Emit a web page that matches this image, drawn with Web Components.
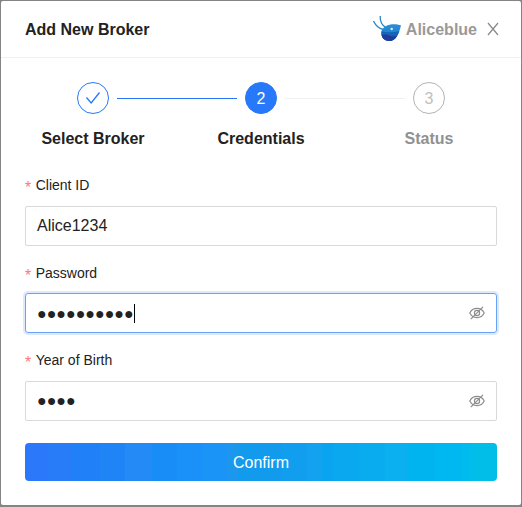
<!DOCTYPE html>
<html lang="en">
<head>
<meta charset="utf-8">
<title>Add New Broker</title>
<style>
html,body{margin:0;height:100%}
body{background:#858383;font-family:"Liberation Sans",Arial,sans-serif;color:#222;box-sizing:border-box;padding:1px 1px 2px;overflow:hidden}
</style>
</head>
<body>
<broker-dialog>
  <dialog-header slot="header" heading="Add New Broker" broker="Aliceblue"></dialog-header>
  <step-bar></step-bar>
  <form-field label="Client ID" value="Alice1234"></form-field>
  <form-field label="Password" value="●●●●●●●●●●" secret focused></form-field>
  <form-field label="Year of Birth" value="●●●●" secret></form-field>
  <confirm-button>Confirm</confirm-button>
</broker-dialog>
<script>
class Base extends HTMLElement {
  connectedCallback() {
    if (!this.shadowRoot) this.attachShadow({mode: 'open'}).innerHTML = this.view();
  }
}

customElements.define('broker-dialog', class extends Base {
  view() { return `<style>
    :host{display:flex;flex-direction:column;box-sizing:border-box;width:520px;height:504px;background:#fff;border-radius:2px}
    .body{display:flex;flex-direction:column;padding:24px 24px 0}
    </style><slot name="header"></slot><div class="body"><slot></slot></div>`; }
});

customElements.define('broker-logo', class extends Base {
  view() { return `<style>:host{display:block;width:30px;height:28px}svg{display:block}</style>
    <svg width="30" height="28" viewBox="0 0 30 28">
      <defs>
        <clipPath id="b"><path d="M28 10.300C24 9 18.500 8.500 14.500 10.300C10.500 12 8.300 14.800 8.300 18C8.300 23 12 26 16.500 26C22.500 26 26 19.500 28 10.300Z"/></clipPath>
        <linearGradient id="g" x1="0" y1="0" x2="0" y2="1"><stop offset="0" stop-color="#2a90d8"/><stop offset="1" stop-color="#1c78cb"/></linearGradient>
      </defs>
      <g clip-path="url(#b)"><rect x="7" y="8" width="22" height="19" fill="url(#g)"/>
      <path d="M7 15.500Q15 19 29 15.500V27H7Z" fill="#1465ba"/>
      <path d="M7 20.500Q12 18.500 17 20.800Q21 22.500 27 20V27H7Z" fill="#213b98"/></g>
      <circle cx="18.700" cy="14" r="1.200" fill="#d5efff"/>
      <path d="M7.200 1C7 5.500 9 10 12.300 12M.5 6C2.500 10 6 13.500 10 14.500" fill="none" stroke="#2687c5" stroke-width="1.300"/>
    </svg>`; }
});

customElements.define('dialog-header', class extends Base {
  view() { return `<style>
    :host{display:flex;align-items:center;box-sizing:border-box;height:57px;padding:0 21px 0 24px;border-bottom:1px solid #f0f0f0}
    b{font-size:16px;line-height:22px;padding-top:2px}
    .brand{margin-left:3px;color:#999}
    broker-logo{margin-left:auto}
    .close{display:block;margin-left:9px}
    </style><b>${this.getAttribute('heading')}</b><broker-logo></broker-logo>
    <b class="brand">${this.getAttribute('broker')}</b>
    <svg class="close" width="14" height="14" viewBox="0 0 14 14"><path d="M2 1L12 13M12 1L2 13" stroke="#888" stroke-width="1.200" fill="none"/></svg>`; }
});

customElements.define('step-bar', class extends Base {
  view() { return `<style>
    :host{display:block;height:97px}
    .track{display:flex;align-items:center;gap:8px;padding:0 52px}
    .dot{box-sizing:border-box;width:32px;height:32px;border:1px solid #2878fa;border-radius:50%;display:flex;align-items:center;justify-content:center;font-size:16px;line-height:18px}
    .dot span{padding-top:2px}
    .on{background:#2878fa;color:#fff}
    .off{border-color:#b3b3b3;color:#bfbfbf}
    .line{flex:1;height:1px;background:#f0f0f0}
    .done{background:#2878fa}
    .names{display:grid;grid-template-columns:repeat(3,136px);column-gap:32px;margin-top:12px;text-align:center;font-size:16px;font-weight:700;line-height:26px}
    .names :last-child{color:#919191}
    svg{display:block}
    </style>
    <div class="track"><div class="dot"><svg width="16" height="16" viewBox="0 0 16 16"><path d="M1.500 7.500L6.200 13L14.500 2.500" fill="none" stroke="#2878fa" stroke-width="1.300"/></svg></div><i class="line done"></i>
    <div class="dot on"><span>2</span></div><i class="line"></i><div class="dot off"><span>3</span></div></div>
    <div class="names"><span>Select Broker</span><span>Credentials</span><span>Status</span></div>`; }
});

customElements.define('eye-icon', class extends Base {
  view() { return `<style>:host{display:block;width:16px;height:14px}svg{display:block}</style>
    <svg width="16" height="14" viewBox="0 0 16 14" fill="none" stroke="#8c8c8c" stroke-width="1.150">
    <path d="M.8 7C3.700 .9 12.300 .9 15.200 7C12.300 13.100 3.700 13.100 .8 7Z"/><circle cx="8" cy="7" r="2.600"/><path d="M1.800 13.200L14 .8"/></svg>`; }
});

customElements.define('form-field', class extends Base {
  view() {
    const secret = this.hasAttribute('secret'), focused = this.hasAttribute('focused');
    return `<style>
    :host{display:flex;flex-direction:column;height:87.400px}
    .label{display:flex;gap:4px;font-size:14px;line-height:16px;height:29px;margin-top:-2px}
    .label i{font:16px/14px "Liberation Sans",sans-serif;color:#ff7875;width:6.700px;padding-top:4px}
    :host([focused]) .label{height:28.500px;margin-top:-1.500px}
    .box{display:flex;align-items:center;box-sizing:border-box;height:40px;padding:0 11px;border:1px solid #d9d9d9;border-radius:2px;font-size:16px;line-height:18px}
    :host([focused]) .box{border-color:#68a1fa;box-shadow:0 0 0 2px #dce9fe;border-radius:3px}
    :host([secret]) .value{padding-top:1px}
    .caret{width:1px;height:19px;margin-top:1px;background:#000}
    eye-icon{margin-left:auto}
    </style><div class="label"><i>*</i><span>${this.getAttribute('label')}</span></div>
    <div class="box"><span class="value">${this.getAttribute('value')}</span>${focused ? '<i class="caret"></i>' : ''}${secret ? '<eye-icon></eye-icon>' : ''}</div>`;
  }
});

customElements.define('confirm-button', class extends Base {
  view() {
    const bands = [['#2b78fa',23],['#297cf8',47],['#2080f7',75],['#1f85f7',100],['#238af6',127],['#188df8',152],['#1991f8',178],['#1a94f7',203],['#1c97ee',213],['#129bec',256],['#129eef',282],['#13a2ef',297],['#08a4ef',308],['#0aa8ef',334],['#0aacf0',360],['#0ab0ef',382],['#00b4ef',410],['#00b8f1',437],['#00bbed',446],['#00bee8',472]];
    let x = 0;
    const stops = bands.map(([c, e]) => { const s = `${c} ${x}px ${e}px`; x = e; return s; }).join(',');
    return `<style>
    :host{display:flex;align-items:center;justify-content:center;box-sizing:border-box;height:38px;margin-top:1.800px;padding-top:2px;border-radius:4px;color:#fff;font-size:16px;line-height:18px;background:linear-gradient(90deg,${stops})}
    </style><slot></slot>`;
  }
});
</script>
</body>
</html>
